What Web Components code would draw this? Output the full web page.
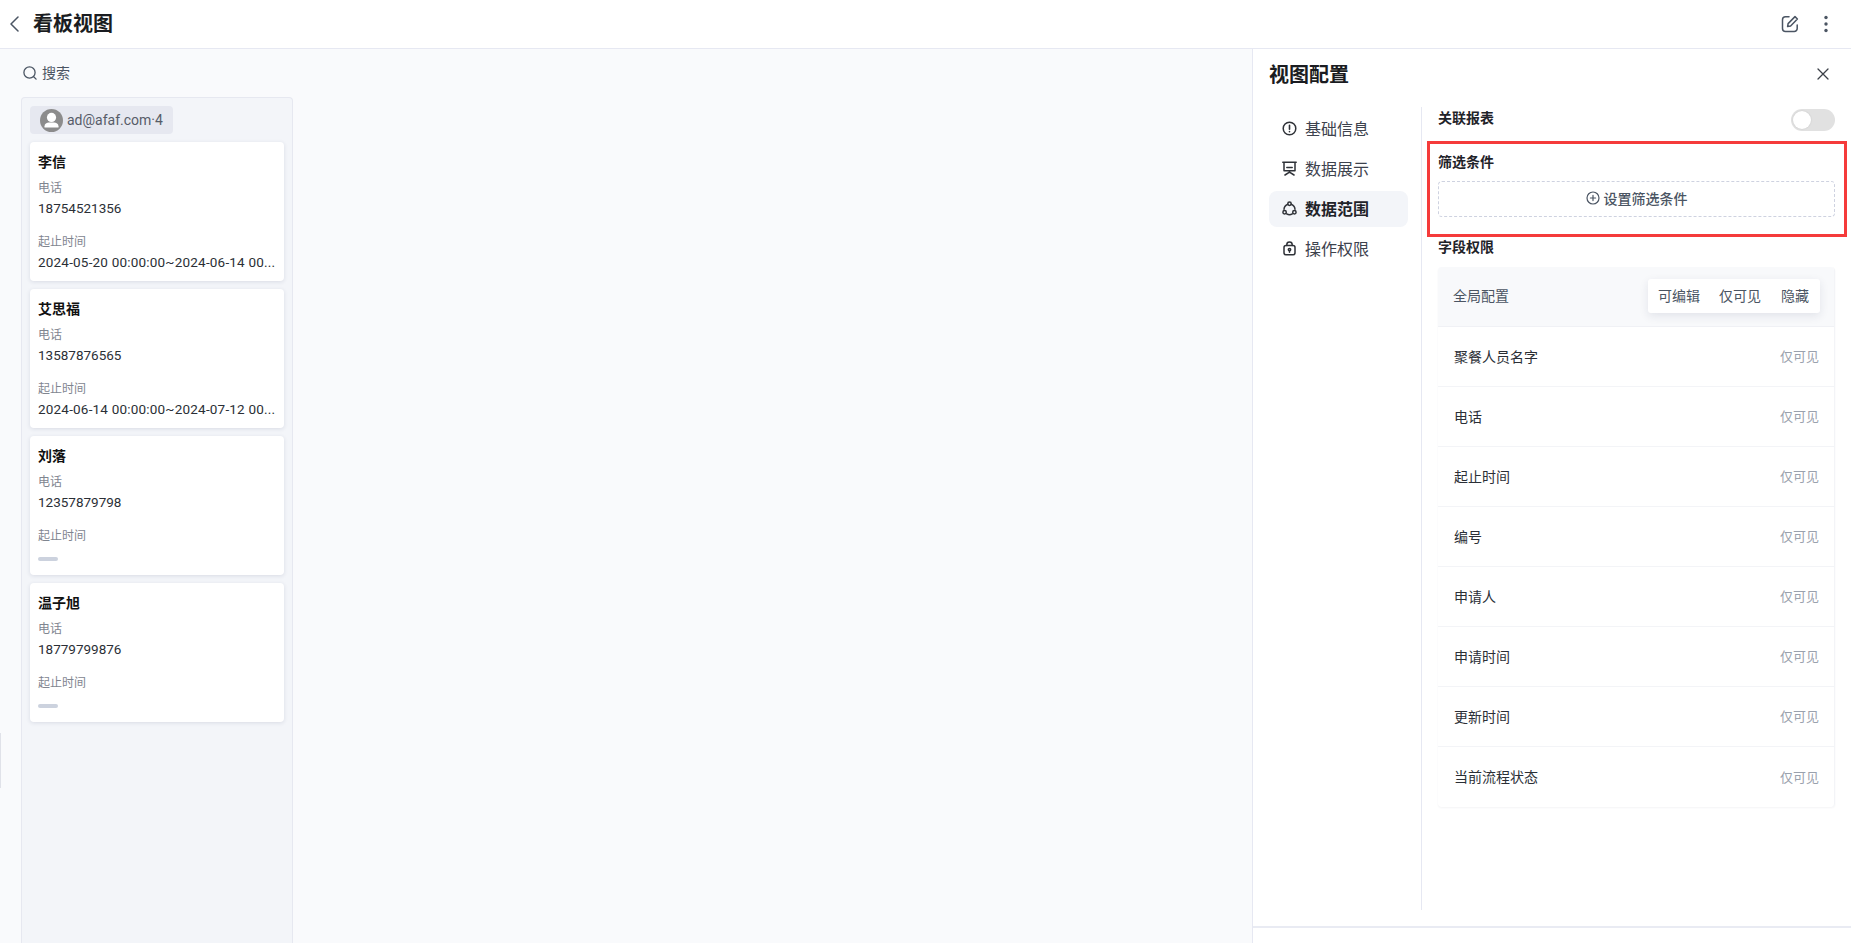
<!DOCTYPE html>
<html lang="zh">
<head>
<meta charset="utf-8">
<title>看板视图</title>
<style>
    html, body { margin: 0; height: 100%; overflow: hidden; }
    body {
        font-family: Roboto, "Noto Sans CJK SC", sans-serif;
        font-size: 14px;
        color: #1f2329;
        background: #fff;
    }
</style>
</head>
<body>
<x-app>
    <x-topbar slot="top" title="看板视图"></x-topbar>
    <x-board slot="board">
        <x-card name="李信" phone="18754521356" range="2024-05-20 00:00:00~2024-06-14 00..."></x-card>
        <x-card name="艾思福" phone="13587876565" range="2024-06-14 00:00:00~2024-07-12 00..."></x-card>
        <x-card name="刘落" phone="12357879798"></x-card>
        <x-card name="温子旭" phone="18779799876"></x-card>
    </x-board>
    <x-config slot="panel">
        <x-perm-row>聚餐人员名字</x-perm-row>
        <x-perm-row>电话</x-perm-row>
        <x-perm-row>起止时间</x-perm-row>
        <x-perm-row>编号</x-perm-row>
        <x-perm-row>申请人</x-perm-row>
        <x-perm-row>申请时间</x-perm-row>
        <x-perm-row>更新时间</x-perm-row>
        <x-perm-row>当前流程状态</x-perm-row>
    </x-config>
</x-app>

<script>
class XApp extends HTMLElement {
    constructor () {
        super()
        this.attachShadow({ mode: 'open' })
        this.shadowRoot.innerHTML = /*html*/ `
        <style>
            :host { display: flex; flex-direction: column; height: 943px; }
            .main { flex: 1; display: flex; min-height: 0; }
            .left { flex: 1; min-width: 0; display: flex; background: #f9fafc; position: relative; }
            .tab { position: absolute; left: 0; top: 684px; width: 1px; height: 55px; background: #e0e2e9; }
        </style>
        <slot name="top"></slot>
        <div class="main">
            <div class="left"><slot name="board"></slot><div class="tab"></div></div>
            <slot name="panel"></slot>
        </div>`
    }
}

class XTopbar extends HTMLElement {
    constructor () {
        super()
        this.attachShadow({ mode: 'open' })
        this.shadowRoot.innerHTML = /*html*/ `
        <style>
            :host {
                display: flex; align-items: center; height: 48px; flex: none;
                background: #fff; border-bottom: 1px solid #e6e8f2; padding: 0 23px 0 10px;
            }
            h1 { margin: 0 0 0 14px; font-size: 20px; line-height: 28px; font-weight: 700; color: #1a1c21; flex: 1; }
            svg { display: block; fill: none; stroke: #4b5563; stroke-linecap: round; stroke-linejoin: round; }
            .edit { margin-right: 25px; }
        </style>
        <svg width="9" height="16" viewBox="0 0 9 16" stroke-width="1.5"><path d="M8 1 1 8l7 7"/></svg>
        <h1>${this.getAttribute('title')}</h1>
        <svg class="edit" width="18" height="18" viewBox="0 0 18 18" stroke-width="1.5">
            <path d="M8 1.8H4.5A3 3 0 0 0 1.5 4.8v8.7a3 3 0 0 0 3 3h8.7a3 3 0 0 0 3-3V10"/>
            <path d="M14 1.6 16.4 4 9.6 11l-3 .6.5-3z"/>
        </svg>
        <svg width="4" height="18" viewBox="0 0 4 18" style="stroke:none;fill:#4b5563"><circle cx="2" cy="2.5" r="1.7"/><circle cx="2" cy="9" r="1.7"/><circle cx="2" cy="15.5" r="1.7"/></svg>`
    }
}

class XBoard extends HTMLElement {
    constructor () {
        super()
        this.attachShadow({ mode: 'open' })
        this.shadowRoot.innerHTML = /*html*/ `
        <style>
            :host { display: flex; flex-direction: column; padding: 13px 0 0 21px; }
            .search { display: flex; align-items: center; gap: 5px; box-sizing: border-box; height: 22px; padding: 0 0 2px 2px; color: #4b5563; font-size: 14px; margin-bottom: 13px; }
            .search svg { display: block; margin-top: 2px; fill: none; stroke: #4b5563; stroke-width: 1.3; stroke-linecap: round; }
            .col {
                flex: 1; box-sizing: border-box; width: 272px; background: #f3f5f9;
                border: 1px solid #e6e8f0; border-bottom: 0; border-radius: 4px 4px 0 0;
                padding: 8px 8px 0 8px; display: flex; flex-direction: column; gap: 8px;
            }
            .group {
                align-self: flex-start; display: flex; align-items: center; height: 28px; width: 143px;
                box-sizing: border-box; padding-left: 10px; background: #e6e8f0; border-radius: 4px;
                color: #565c68; font-size: 14px; gap: 4px;
            }
            .group svg { display: block; }
            ::slotted(x-card) { margin: 0; }
        </style>
        <div class="search">
            <svg width="14" height="14" viewBox="0 0 14 14"><circle cx="6.5" cy="6.5" r="5.6"/><path d="m10.7 10.7 2.4 2.4"/></svg>
            <span>搜索</span>
        </div>
        <div class="col">
            <div class="group">
                <svg width="23" height="23" viewBox="0 0 23 23">
                    <circle cx="11.5" cy="11.5" r="11.5" fill="#8c8c8c"/>
                    <circle cx="11.5" cy="8.4" r="4.6" fill="#fff"/>
                    <path d="M4.5 18.6v-1.4c0-2.6 2.4-3.8 4.4-3.8h5.2c2 0 4.4 1.2 4.4 3.8v1.4z" fill="#fff"/>
                </svg>
                <span>ad@afaf.com·4</span>
            </div>
            <slot></slot>
        </div>`
    }
}

class XCard extends HTMLElement {
    constructor () {
        super()
        this.attachShadow({ mode: 'open' })
        const range = this.getAttribute('range')
        this.shadowRoot.innerHTML = /*html*/ `
        <style>
            :host {
                display: block; box-sizing: border-box; width: 254px; height: 139px; padding: 10px 8px 0;
                background: #fff; border-radius: 4px; box-shadow: 0 1px 4px rgba(30, 40, 80, .12);
            }
            .name { font-weight: 700; font-size: 14px; line-height: 20px; color: #111; }
            .label { font-size: 12px; line-height: 17px; color: #7f8590; margin-top: 8px; }
            .value { font-size: 13.5px; line-height: 20px; color: #2b2f36; margin-top: 1px; white-space: nowrap; }
            .range { letter-spacing: .2px; }
            .gap { margin-top: 16px; }
            .dash { width: 20px; height: 4px; border-radius: 2px; background: #ccd2de; margin-top: 12px; }
        </style>
        <div class="name">${this.getAttribute('name')}</div>
        <div class="label">电话</div>
        <div class="value">${this.getAttribute('phone')}</div>
        <div class="label gap">起止时间</div>
        ${range ? `<div class="value range">${range}</div>` : '<div class="dash"></div>'}`
    }
}

class XNavItem extends HTMLElement {
    constructor () {
        super()
        this.attachShadow({ mode: 'open' })
        this.shadowRoot.innerHTML = /*html*/ `
        <style>
            :host {
                display: flex; align-items: center; box-sizing: border-box; height: 36px; gap: 8px; padding: 0 0 2px 13px;
                border-radius: 8px; font-size: 16px; color: #3d424d;
            }
            :host([active]) { background: #f3f5f9; color: #1f2329; font-weight: 700; }
            ::slotted(svg) { display: block; width: 15px; height: 15px; fill: none; stroke: #2f3238; stroke-width: 1.5; stroke-linecap: round; stroke-linejoin: round; }
        </style>
        <slot name="icon"></slot><slot></slot>`
    }
}

class XPermRow extends HTMLElement {
    constructor () {
        super()
        this.attachShadow({ mode: 'open' })
        this.shadowRoot.innerHTML = /*html*/ `
        <style>
            :host {
                display: flex; align-items: center; justify-content: space-between; box-sizing: border-box;
                height: 60px; padding: 0 15px 2px 16px; border-bottom: 1px solid #f3f4f7; font-size: 14px; color: #2b2f36;
            }
            :host(:last-child) { border-bottom: 0; }
            .v { color: #9aa1ad; font-size: 13px; }
        </style>
        <span><slot></slot></span><span class="v">仅可见</span>`
    }
}

class XConfig extends HTMLElement {
    constructor () {
        super()
        this.attachShadow({ mode: 'open' })
        this.shadowRoot.innerHTML = /*html*/ `
        <style>
            :host {
                display: flex; flex-direction: column; flex: none; box-sizing: border-box; width: 599px;
                background: #fff; border-left: 1px solid #e6e8f2;
            }
            .head { display: flex; align-items: center; justify-content: space-between; height: 52px; padding: 0 22px 0 16px; flex: none; }
            .head h2 { margin: 0; font-size: 20px; line-height: 28px; font-weight: 700; color: #1a1c21; }
            .head svg { display: block; margin-bottom: 2px; fill: none; stroke: #3c4048; stroke-width: 1.3; stroke-linecap: round; }
            .body { display: flex; height: 803px; margin-top: 6px; flex: none; }
            .nav { box-sizing: border-box; width: 169px; padding: 4px 13px 0 16px; border-right: 1px solid #e6e8f2; display: flex; flex-direction: column; gap: 4px; }
            .content { flex: 1; min-width: 0; padding: 0 16px; position: relative; }
            .foot { flex: 1; border-top: 2px solid #e9ebf3; margin-top: 16px; }
            h3 { margin: 0; font-size: 14px; line-height: 20px; font-weight: 700; color: #1f2329; }
            .line { display: flex; align-items: flex-start; justify-content: space-between; height: 22px; margin-top: 2px; }
            .line h3 { margin-top: -1px; }
            .toggle { width: 44px; height: 22px; border-radius: 11px; background: #e1e1e1; position: relative; }
            .toggle::after { content: ""; position: absolute; left: 2px; top: 2px; width: 18px; height: 18px; border-radius: 50%; background: #fff; box-shadow: 0 0 2px rgba(0, 0, 0, .12); }
            .mark { position: absolute; left: 5px; right: 4px; top: 34px; height: 96px; box-sizing: border-box; border: 3px solid #f53b3b; pointer-events: none; }
            .filter-title { margin-top: 21px; }
            .add {
                display: flex; align-items: center; justify-content: center; gap: 4px; height: 36px; margin-top: 9px;
                box-sizing: border-box; padding-bottom: 2px; border: 1px dashed #ced2e0; border-radius: 4px;
                color: #4b5563; font-weight: 500; font-size: 14px;
            }
            .add svg { display: block; fill: none; stroke: #4b5563; stroke-width: 1.2; stroke-linecap: round; }
            .perm-title { margin-top: 20px; }
            .table { margin-top: 10px; border-radius: 4px; box-shadow: 0 1px 2px rgba(30, 40, 80, .05); border-right: 1px solid #f3f4f7; }
            .global { display: flex; align-items: center; justify-content: space-between; box-sizing: border-box; height: 60px; padding: 0 14px 2px 15px; background: #f8f9fb; color: #4b5563; border-bottom: 1px solid #f0f1f5; border-radius: 4px 4px 0 0; }
            .global > span { margin-top: -2px; }
            .seg { display: flex; padding: 0 11px 0 10px; height: 34px; align-items: center; background: #fff; border-radius: 3px; box-shadow: 0 3px 10px rgba(30, 40, 80, .1); color: #4b5563; }
            .seg span { margin-top: -1px; }
            .seg span + span { margin-left: 19px; }
            .seg span:last-child { margin-left: 20px; }
        </style>
        <div class="head">
            <h2>视图配置</h2>
            <svg width="12" height="12" viewBox="0 0 12 12"><path d="m1 1 10 10M11 1 1 11"/></svg>
        </div>
        <div class="body">
            <div class="nav">
                <x-nav-item><svg slot="icon" viewBox="0 0 15 15"><circle cx="7.5" cy="7.5" r="6.3"/><path d="M7.5 4.2v4M7.5 10.6v.2" stroke-width="1.6"/></svg>基础信息</x-nav-item>
                <x-nav-item><svg slot="icon" viewBox="0 0 15 15"><path d="M.8 1.2h13.4M2 1.2v8.6h11V1.2M4.8 6.4h5.4M7.5 9.8v1.6M7.5 11.2 3 14M7.5 11.2 12 14"/></svg>数据展示</x-nav-item>
                <x-nav-item active><svg slot="icon" viewBox="0 0 15 15"><circle cx="7.5" cy="2.8" r="1.7"/><circle cx="2.6" cy="11.2" r="1.7"/><circle cx="12.4" cy="11.2" r="1.7"/><path d="M5.8 3.2A5.8 5.8 0 0 0 2 8.2M9.2 3.2a5.8 5.8 0 0 1 3.8 5M4.7 12.9a5.8 5.8 0 0 0 5.6 0"/></svg>数据范围</x-nav-item>
                <x-nav-item><svg slot="icon" viewBox="0 0 15 15"><rect x="2" y="4.6" width="11" height="9.2" rx="2"/><path d="M4.8 4.6V3.8a2.7 2.7 0 0 1 5.4 0v.8"/><circle cx="7.5" cy="8.6" r="1.2"/><path d="M7.5 9.8v1.4"/></svg>操作权限</x-nav-item>
            </div>
            <div class="content">
                <div class="line"><h3>关联报表</h3><div class="toggle"></div></div>
                <div class="mark"></div>
                <h3 class="filter-title">筛选条件</h3>
                <div class="add">
                    <svg width="14" height="14" viewBox="0 0 14 14"><circle cx="7" cy="7" r="6"/><path d="M7 4.4v5.2M4.4 7h5.2"/></svg>
                    <span>设置筛选条件</span>
                </div>
                <h3 class="perm-title">字段权限</h3>
                <div class="table">
                    <div class="global">
                        <span>全局配置</span>
                        <div class="seg"><span>可编辑</span><span>仅可见</span><span>隐藏</span></div>
                    </div>
                    <slot></slot>
                </div>
            </div>
        </div>
        <div class="foot"></div>`
    }
}

customElements.define('x-app', XApp)
customElements.define('x-topbar', XTopbar)
customElements.define('x-board', XBoard)
customElements.define('x-card', XCard)
customElements.define('x-nav-item', XNavItem)
customElements.define('x-perm-row', XPermRow)
customElements.define('x-config', XConfig)
</script>
</body>
</html>
